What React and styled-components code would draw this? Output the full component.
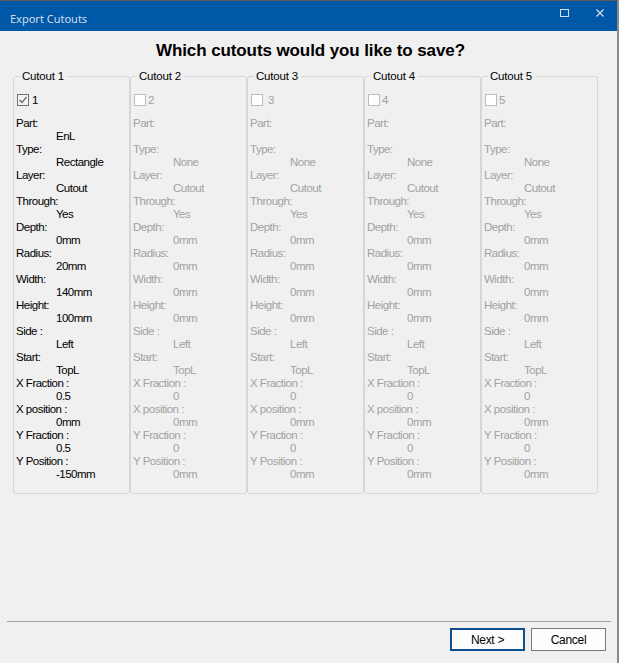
import React from 'react';
import styled, { createGlobalStyle } from 'styled-components';

const LABELS = [
  'Part:',
  'Type:',
  'Layer:',
  'Through:',
  'Depth:',
  'Radius:',
  'Width:',
  'Height:',
  'Side :',
  'Start:',
  'X Fraction :',
  'X position :',
  'Y Fraction :',
  'Y Position :',
];

const EMPTY_VALUES = ['', 'None', 'Cutout', 'Yes', '0mm', '0mm', '0mm', '0mm', 'Left', 'TopL', '0', '0mm', '0', '0mm'];

const CUTOUTS = [
  {
    id: 1,
    checked: true,
    enabled: true,
    gap: 3,
    values: ['EnL', 'Rectangle', 'Cutout', 'Yes', '0mm', '20mm', '140mm', '100mm', 'Left', 'TopL', '0.5', '0mm', '0.5', '-150mm'],
  },
  { id: 2, gap: 2, values: EMPTY_VALUES },
  { id: 3, gap: 5, values: EMPTY_VALUES },
  { id: 4, gap: 2, values: EMPTY_VALUES },
  { id: 5, gap: 2, values: EMPTY_VALUES },
];

const App = () => {
  return (
    <>
      <GlobalStyle />
      <Window>
        <TitleBar>
          <TitleText>Export Cutouts</TitleText>
          <TitleButtons>
            <TitleButton aria-label="Maximize">
              <svg width="9" height="8" viewBox="0 0 9 8">
                <rect x="0.5" y="0.5" width="8" height="7" fill="none" stroke="#d6deea" strokeWidth="1" />
              </svg>
            </TitleButton>
            <TitleButton aria-label="Close">
              <svg width="8" height="8" viewBox="0 0 8 8">
                <path d="M0.5 0.5 L7.5 7.5 M7.5 0.5 L0.5 7.5" stroke="#d6deea" strokeWidth="1.2" />
              </svg>
            </TitleButton>
          </TitleButtons>
        </TitleBar>
        <Body>
          <Heading>Which cutouts would you like to save?</Heading>
          <GroupRow>
            {CUTOUTS.map(cutout => (
              <Group key={cutout.id}>
                <Legend>Cutout {cutout.id}</Legend>
                <CheckRow $gap={cutout.gap}>
                  <CheckBox $enabled={cutout.enabled}>
                    {cutout.checked && (
                      <svg width="10" height="10" viewBox="0 0 10 10">
                        <path d="M1.5 5 L4 7.5 L8.5 2" fill="none" stroke="#6f6f6f" strokeWidth="1.4" />
                      </svg>
                    )}
                  </CheckBox>
                  <FieldText $enabled={cutout.enabled}>{cutout.id}</FieldText>
                </CheckRow>
                <FieldList>
                  {LABELS.map((label, idx) => (
                    <Field key={label}>
                      <FieldText $enabled={cutout.enabled}>{label}</FieldText>
                      <FieldValue $enabled={cutout.enabled}>{cutout.values[idx]}</FieldValue>
                    </Field>
                  ))}
                </FieldList>
              </Group>
            ))}
          </GroupRow>
        </Body>
        <Separator />
        <Footer>
          <Button $primary>Next &gt;</Button>
          <Button>Cancel</Button>
        </Footer>
      </Window>
    </>
  );
};

export default App;

const GlobalStyle = createGlobalStyle`
  html, body {
    margin: 0;
    padding: 0;
    background: #f0f0f0;
  }
  * {
    box-sizing: border-box;
  }
`;
const Window = styled.div`
  width: 619px;
  height: 663px;
  display: flex;
  flex-direction: column;
  background-color: #f0f0f0;
  border-top: 1px solid #5c5c5c;
  border-right: 2px solid #8c8c8c;
  font-family: 'Liberation Sans', Arial, sans-serif;
  color: #000;
`;
const TitleBar = styled.div`
  height: 30px;
  flex-shrink: 0;
  display: flex;
  align-items: center;
  justify-content: space-between;
  background-color: #0058a8;
  padding-left: 10px;
`;
const TitleText = styled.div`
  font-family: 'Noto Sans', 'Open Sans', sans-serif;
  font-size: 11px;
  color: #d3dcea;
  margin-top: 5px;
`;
const TitleButtons = styled.div`
  display: flex;
  align-self: flex-start;
  padding-top: 7px;
`;
const TitleButton = styled.div`
  width: 35px;
  height: 10px;
  display: flex;
  align-items: center;
  justify-content: center;
`;
const Body = styled.div`
  flex: 1;
  display: flex;
  flex-direction: column;
`;
const Heading = styled.h1`
  margin: 10px 0 0 0;
  text-align: center;
  font-size: 17px;
  line-height: 20px;
  font-weight: 700;
  letter-spacing: -0.1px;
  padding-left: 4px;
`;
const GroupRow = styled.div`
  display: flex;
  padding-left: 13px;
  margin-top: 8px;
`;
const Group = styled.fieldset`
  width: 117px;
  height: 425px;
  margin: 0;
  padding: 10px 2px 0 2px;
  border: 1px solid #d6d6d6;
  border-radius: 3px;
`;
const Legend = styled.legend`
  font-size: 11.5px;
  line-height: 14px;
  letter-spacing: -0.2px;
  padding: 0 3px 0 2px;
  margin-left: 4px;
`;
const CheckRow = styled.div`
  display: flex;
  align-items: center;
  gap: ${props => props.$gap}px;
  padding-left: 1px;
  height: 14px;
`;
const CheckBox = styled.span`
  width: 12px;
  height: 12px;
  display: flex;
  align-items: center;
  justify-content: center;
  border: 1px solid ${props => (props.$enabled ? '#707070' : '#bcbcbc')};
  background-color: ${props => (props.$enabled ? '#f4f4f4' : '#fff')};
`;
const FieldList = styled.div`
  display: flex;
  flex-direction: column;
  margin-top: 10px;
`;
const Field = styled.div`
  display: flex;
  flex-direction: column;
`;
const FieldText = styled.div`
  font-size: 11.5px;
  line-height: 13px;
  height: 13px;
  letter-spacing: -0.5px;
  white-space: nowrap;
  color: ${props => (props.$enabled ? '#000' : '#a2a2a2')};
`;
const FieldValue = styled(FieldText)`
  padding-left: 40px;
`;
const Separator = styled.div`
  height: 1px;
  margin: 0 6px 0 7px;
  background-color: #a0a0a0;
  flex-shrink: 0;
`;
const Footer = styled.div`
  display: flex;
  justify-content: flex-end;
  gap: 6px;
  padding: 6px 11px 12px 0;
`;
const Button = styled.div`
  width: 75px;
  height: 23px;
  display: flex;
  align-items: center;
  justify-content: center;
  font-size: 12px;
  letter-spacing: -0.3px;
  background-color: #fdfdfd;
  border-style: solid;
  border-color: ${props => (props.$primary ? '#0a4f8f' : '#7a7a7a')};
  border-width: ${props => (props.$primary ? '2px' : '1.5px')};
`;
